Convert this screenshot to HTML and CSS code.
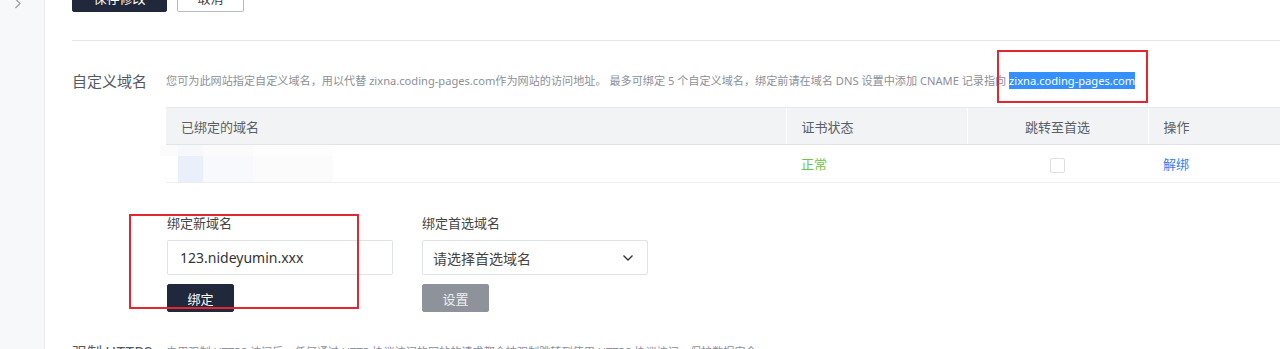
FILE: index.html
```html
<!DOCTYPE html>
<html lang="zh-CN">
<head>
  <meta charset="UTF-8">
  <meta name="viewport" content="width=device-width, initial-scale=1.0">
  <title>自定义域名</title>
  <link rel="stylesheet" href="styles.css">
</head>
<body>
  <div class="layout">
    <aside class="sidebar">
      <svg class="chevron" width="8" height="12" viewBox="0 0 8 12">
        <polyline points="1.5,1 6,5.5 1.5,10" fill="none" stroke="#9aa0a8" stroke-width="1.3"/>
      </svg>
    </aside>
    <main class="main">
      <div class="actions">
        <button class="btn btn-dark btn-save">保存修改</button>
        <button class="btn btn-outline">取消</button>
      </div>
      <hr class="divider">

      <section class="section">
        <div class="section-head">
          <h3 class="section-title">自定义域名</h3>
          <p class="section-desc">您可为此网站指定自定义域名，用以代替 zixna.coding-pages.com作为网站的访问地址。 最多可绑定 5 个自定义域名，绑定前请在域名 DNS 设置中添加 CNAME 记录指向 <span class="selected">zixna.coding-pages.com<span class="red-box box-cname"></span></span></p>
        </div>

        <table class="domains">
          <thead>
            <tr>
              <th class="col-domain">已绑定的域名</th>
              <th class="col-cert">证书状态</th>
              <th class="col-jump">跳转至首选</th>
              <th class="col-op">操作</th>
            </tr>
          </thead>
          <tbody>
            <tr>
              <td class="col-domain">
                <div class="mosaic">
                  <span class="tile t1"></span>
                  <span class="tile t2"></span>
                  <span class="tile t3"></span>
                  <span class="tile t4"></span>
                </div>
              </td>
              <td class="col-cert"><span class="ok">正常</span></td>
              <td class="col-jump"><span class="checkbox"></span></td>
              <td class="col-op"><a class="link">解绑</a></td>
            </tr>
          </tbody>
        </table>

        <div class="forms">
          <div class="field">
            <label class="field-label">绑定新域名</label>
            <input class="input" type="text" value="123.nideyumin.xxx">
            <button class="btn btn-dark btn-small">绑定</button>
            <span class="red-box box-bind"></span>
          </div>
          <div class="field">
            <label class="field-label">绑定首选域名</label>
            <div class="select">
              <span>请选择首选域名</span>
              <svg width="12" height="8" viewBox="0 0 12 8">
                <polyline points="1.5,1.5 6,6 10.5,1.5" fill="none" stroke="#333" stroke-width="1.4"/>
              </svg>
            </div>
            <button class="btn btn-grey btn-small">设置</button>
          </div>
        </div>
      </section>

      <section class="section">
        <div class="section-head">
          <h3 class="section-title">强制 HTTPS</h3>
          <p class="section-desc">启用强制 HTTPS 访问后，任何通过 HTTP 协议访问的网站的请求都会被强制跳转到使用 HTTPS 协议访问，保护数据安全。</p>
        </div>
      </section>
    </main>
  </div>
</body>
</html>
```

FILE: styles.css
```css
* {
  box-sizing: border-box;
}
body {
  margin: 0;
  font-family: "Noto Sans", "Noto Sans CJK SC", sans-serif;
  color: #333;
  background: #fff;
  overflow: hidden;
}
.layout {
  display: flex;
  min-height: 349px;
}
.sidebar {
  width: 45px;
  flex-shrink: 0;
  background: #f7f8fa;
  border-right: 1px solid #e6e8eb;
  padding-left: 14px;
}
.chevron {
  display: block;
  margin-top: -2px;
}
.main {
  flex: 1;
  padding-left: 27px;
  min-width: 0;
}
.actions {
  display: flex;
  gap: 10px;
  margin-top: -18px;
}
.btn {
  font-family: "Noto Sans CJK SC", sans-serif;
  font-size: 13px;
  border-radius: 2px;
  cursor: pointer;
}
.btn-dark {
  background: #1f293b;
  color: #fff;
  border: 1px solid #1f293b;
}
.btn-save {
  width: 95px;
  height: 30px;
}
.btn-outline {
  width: 67px;
  height: 30px;
  background: #fff;
  color: #444;
  border: 1px solid #b5b9c0;
}
.btn-grey {
  background: #8e939b;
  color: #eceef0;
  border: 1px solid #8e939b;
}
.btn-small {
  width: 67px;
  height: 28px;
  padding: 0;
}
.divider {
  border: 0;
  border-top: 1px solid #e3e5e9;
  margin: 28px 0 0;
}
.section-head {
  display: flex;
  align-items: center;
  height: 48px;
  margin-top: 15px;
}
.section-title {
  width: 94px;
  flex-shrink: 0;
  margin: 0;
  font-family: "Noto Sans CJK SC", sans-serif;
  font-weight: 400;
  font-size: 15px;
  color: #555a62;
}
.section-desc {
  margin: 0;
  font-family: "Noto Sans", "Noto Sans CJK SC", sans-serif;
  font-size: 11.13px;
  color: #8b9099;
  white-space: nowrap;
}
.selected {
  position: relative;
  background: #3490ff;
  color: #fff;
  padding: 1px 0;
}
.red-box {
  position: absolute;
  border: 2px solid #e4262e;
  pointer-events: none;
}
.box-cname {
  left: -12px;
  right: -13px;
  top: -22px;
  bottom: -14px;
}
.domains {
  margin-left: 94px;
  margin-top: 3px;
  width: calc(100% - 94px);
  border-collapse: collapse;
  font-family: "Noto Sans CJK SC", sans-serif;
  font-size: 13px;
}
.domains th,
.domains td {
  height: 37px;
  padding: 0 15px;
  text-align: left;
  font-weight: 400;
}
.domains th {
  background: #f2f3f5;
  color: #5a5f67;
  border-top: 1px solid #e6e8eb;
  border-bottom: 1px solid #e2e4e8;
  border-left: 1px solid #fff;
}
.domains th:first-child {
  border-left: 0;
}
.domains td {
  border-bottom: 1px solid #eceef1;
}
.col-domain {
  width: 620px;
}
.col-cert {
  width: 181px;
}
.domains .col-jump {
  width: 181px;
  text-align: center;
}
.domains td.col-domain {
  padding: 0;
}
.mosaic {
  display: flex;
  height: 37px;
  margin-left: -6px;
}
.tile {
  display: block;
  height: 100%;
}
.t1 {
  width: 18px;
  background: linear-gradient(#fbfbfc 30%, #fff 30%);
}
.t2 {
  width: 25px;
  background: linear-gradient(#f7f8fa 30%, #e9f0fb 30%);
}
.t3 {
  width: 50px;
  background: linear-gradient(#fbfbfc 30%, #f7f9fd 30%);
}
.t4 {
  width: 80px;
  background: linear-gradient(#fdfdfd 30%, #fbfbfc 30%);
}
.ok {
  color: #6cc644;
}
.checkbox {
  display: inline-block;
  width: 15px;
  height: 15px;
  border: 1px solid #dcdfe4;
  border-radius: 2px;
  vertical-align: middle;
}
.link {
  color: #2f7ff0;
  cursor: pointer;
}
.forms {
  display: flex;
  gap: 29px;
  margin-left: 95px;
  margin-top: 31px;
}
.field {
  position: relative;
  display: flex;
  flex-direction: column;
  align-items: flex-start;
  width: 226px;
}
.field-label {
  font-family: "Noto Sans CJK SC", sans-serif;
  font-size: 13px;
  line-height: 18px;
  color: #444;
}
.input,
.select {
  width: 226px;
  height: 35px;
  margin: 8px 0 9px;
  border: 1px solid #dfe2e7;
  border-radius: 2px;
  padding: 0 12px;
  font-family: "Noto Sans", "Noto Sans CJK SC", sans-serif;
  font-size: 14px;
  color: #333;
}
.select {
  display: flex;
  align-items: center;
  justify-content: space-between;
  padding: 0 13px 0 10px;
  font-family: "Noto Sans CJK SC", sans-serif;
  color: #444;
}
.box-bind {
  left: -38px;
  top: 0;
  width: 230px;
  height: 95px;
}
```
